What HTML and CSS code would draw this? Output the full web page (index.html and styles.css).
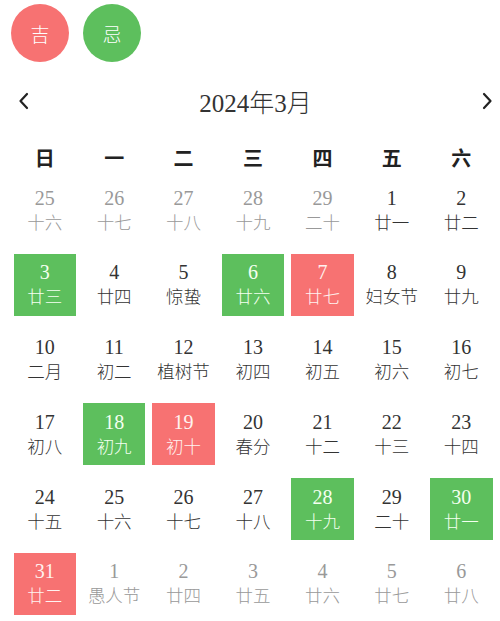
FILE: index.html
```html
<!DOCTYPE html>
<html lang="zh">
<head>
<meta charset="utf-8">
<link rel="stylesheet" href="styles.css">
</head>
<body>
<div class="legend">
  <div class="dot dot-good">吉</div>
  <div class="dot dot-bad">忌</div>
</div>
<div class="nav">
  <svg class="chev" width="14" height="20" viewBox="0 0 14 20"><path d="M10 3 L3.5 10 L10 17" fill="none" stroke="#222" stroke-width="2.2" stroke-linecap="round" stroke-linejoin="round"/></svg>
  <div class="title">2024年3月</div>
  <svg class="chev" width="14" height="20" viewBox="0 0 14 20"><path d="M4 3 L10.5 10 L4 17" fill="none" stroke="#222" stroke-width="2.2" stroke-linecap="round" stroke-linejoin="round"/></svg>
</div>
<div class="weekdays">
  <div>日</div><div>一</div><div>二</div><div>三</div><div>四</div><div>五</div><div>六</div>
</div>
<div class="days">
  <div class="day other"><span class="n">25</span><span class="l">十六</span></div>
  <div class="day other"><span class="n">26</span><span class="l">十七</span></div>
  <div class="day other"><span class="n">27</span><span class="l">十八</span></div>
  <div class="day other"><span class="n">28</span><span class="l">十九</span></div>
  <div class="day other"><span class="n">29</span><span class="l">二十</span></div>
  <div class="day"><span class="n">1</span><span class="l">廿一</span></div>
  <div class="day"><span class="n">2</span><span class="l">廿二</span></div>

  <div class="day good"><span class="n">3</span><span class="l">廿三</span></div>
  <div class="day"><span class="n">4</span><span class="l">廿四</span></div>
  <div class="day"><span class="n">5</span><span class="l">惊蛰</span></div>
  <div class="day good"><span class="n">6</span><span class="l">廿六</span></div>
  <div class="day bad"><span class="n">7</span><span class="l">廿七</span></div>
  <div class="day"><span class="n">8</span><span class="l">妇女节</span></div>
  <div class="day"><span class="n">9</span><span class="l">廿九</span></div>

  <div class="day"><span class="n">10</span><span class="l">二月</span></div>
  <div class="day"><span class="n">11</span><span class="l">初二</span></div>
  <div class="day"><span class="n">12</span><span class="l">植树节</span></div>
  <div class="day"><span class="n">13</span><span class="l">初四</span></div>
  <div class="day"><span class="n">14</span><span class="l">初五</span></div>
  <div class="day"><span class="n">15</span><span class="l">初六</span></div>
  <div class="day"><span class="n">16</span><span class="l">初七</span></div>

  <div class="day"><span class="n">17</span><span class="l">初八</span></div>
  <div class="day good"><span class="n">18</span><span class="l">初九</span></div>
  <div class="day bad"><span class="n">19</span><span class="l">初十</span></div>
  <div class="day"><span class="n">20</span><span class="l">春分</span></div>
  <div class="day"><span class="n">21</span><span class="l">十二</span></div>
  <div class="day"><span class="n">22</span><span class="l">十三</span></div>
  <div class="day"><span class="n">23</span><span class="l">十四</span></div>

  <div class="day"><span class="n">24</span><span class="l">十五</span></div>
  <div class="day"><span class="n">25</span><span class="l">十六</span></div>
  <div class="day"><span class="n">26</span><span class="l">十七</span></div>
  <div class="day"><span class="n">27</span><span class="l">十八</span></div>
  <div class="day good"><span class="n">28</span><span class="l">十九</span></div>
  <div class="day"><span class="n">29</span><span class="l">二十</span></div>
  <div class="day good"><span class="n">30</span><span class="l">廿一</span></div>

  <div class="day bad"><span class="n">31</span><span class="l">廿二</span></div>
  <div class="day other"><span class="n">1</span><span class="l">愚人节</span></div>
  <div class="day other"><span class="n">2</span><span class="l">廿四</span></div>
  <div class="day other"><span class="n">3</span><span class="l">廿五</span></div>
  <div class="day other"><span class="n">4</span><span class="l">廿六</span></div>
  <div class="day other"><span class="n">5</span><span class="l">廿七</span></div>
  <div class="day other"><span class="n">6</span><span class="l">廿八</span></div>
</div>
</body>
</html>
```
FILE: styles.css
```css
* { box-sizing: border-box; }
html, body { margin: 0; padding: 0; background: #fff; }
body {
  padding: 0 4px 0 10px;
  font-family: "Liberation Serif", "Noto Sans CJK SC", serif;
  color: #333;
  overflow: hidden;
}
.legend {
  display: flex;
  gap: 14px;
  padding-top: 4px;
  padding-left: 1px;
}
.dot {
  width: 58px;
  height: 58px;
  border-radius: 50%;
  display: flex;
  align-items: center;
  justify-content: center;
  color: #fff;
  font-family: "Noto Sans CJK SC", sans-serif;
  font-weight: 300;
  font-size: 19px;
}
.dot-good { background: #f77272; }
.dot-bad { background: #5dbf5d; }
.nav {
  margin-top: 17px;
  height: 44px;
  display: flex;
  align-items: center;
  justify-content: space-between;
  padding: 0 2px 0 7px;
}
.title {
  font-size: 25px;
  color: #333;
  font-family: "Liberation Serif", "Noto Sans CJK SC", serif;
  font-weight: 300;
}
.weekdays {
  margin-top: 13px;
  height: 42px;
  display: grid;
  grid-template-columns: repeat(7, 1fr);
  align-items: center;
  text-align: center;
  font-family: "Noto Sans CJK SC", sans-serif;
  font-weight: 700;
  font-size: 20px;
  color: #222;
}
.days {
  display: grid;
  grid-template-columns: repeat(7, 1fr);
  grid-auto-rows: 62px;
  row-gap: 12.8px;
  margin-top: 1px;
}
.day {
  margin: 0 3.5px;
  display: flex;
  flex-direction: column;
  align-items: center;
  justify-content: center;
  color: #333;
}
.day .n {
  font-family: "Liberation Serif", serif;
  font-size: 20px;
  line-height: 23px;
}
.day .l {
  font-family: "Noto Sans CJK SC", sans-serif;
  font-weight: 300;
  font-size: 17.5px;
  line-height: 24px;
}
.day.other { color: #999; }
.day.good { background: #5dbf5d; color: #f4fff0; }
.day.bad { background: #f77272; color: #fff2f0; }
```
